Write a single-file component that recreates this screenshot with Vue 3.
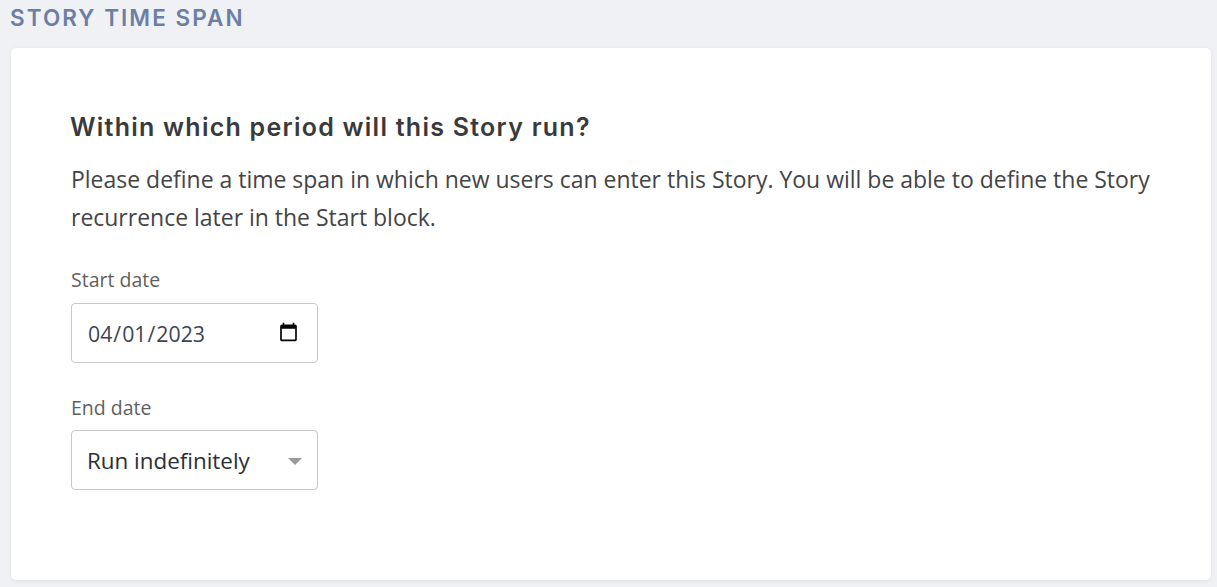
<script setup>
import { ref } from "vue";

const startDate = ref("2023-04-01");
const endDate = ref("indefinite");
</script>

<template>
  <div class="page">
    <h2 class="section-title">STORY TIME SPAN</h2>
    <div class="card">
      <h3 class="card-title">Within which period will this Story run?</h3>
      <p class="card-text">
        Please define a time span in which new users can enter this Story. You will be able to define the Story
        recurrence later in the Start block.
      </p>

      <div class="form-group">
        <label for="start" class="form-label">Start date</label>
        <input id="start" v-model="startDate" type="date" class="form-input form-date" />
      </div>

      <div class="form-group">
        <label for="end" class="form-label">End date</label>
        <div class="select-wrap">
          <select id="end" v-model="endDate" class="form-input form-select">
            <option value="indefinite">Run indefinitely</option>
            <option value="date">Pick a date</option>
          </select>
          <span class="select-arrow"></span>
        </div>
      </div>
    </div>
  </div>
</template>

<style scoped>
.page {
  box-sizing: border-box;
  height: 587px;
  padding: 0 6px 7px 11px;
  background: #f0f1f5;
  font-family: "Open Sans", sans-serif;
  overflow: hidden;
}

.section-title {
  margin: 0 0 0 -1px;
  height: 48px;
  padding-top: 6px;
  box-sizing: border-box;
  font-family: Inter, sans-serif;
  font-size: 22.5px;
  line-height: 24px;
  font-weight: 600;
  letter-spacing: 2.05px;
  color: #6c7fa3;
}

.card {
  box-sizing: border-box;
  height: 532px;
  padding: 64px 60px 0;
  background: #fff;
  border-radius: 5px;
  box-shadow: 0 1px 4px rgba(40, 50, 80, 0.08);
}

.card-title {
  margin: 0 0 0 -1px;
  font-family: Inter, sans-serif;
  font-size: 25px;
  line-height: 30px;
  font-weight: 600;
  letter-spacing: 1.25px;
  color: #3a3a3d;
}

.card-text {
  margin: 18px 0 0;
  font-size: 22.97px;
  line-height: 38px;
  color: #444446;
}

.form-group {
  margin-top: 31px;
  width: 247px;
}

.form-group + .form-group {
  margin-top: 32px;
}

.form-label {
  display: block;
  margin-bottom: 11px;
  font-size: 19.5px;
  line-height: 25px;
  color: #5f5f5f;
}

.form-group + .form-group .form-label {
  margin-bottom: 10px;
}

.form-input {
  display: block;
  box-sizing: border-box;
  width: 100%;
  height: 60px;
  padding: 0 16px;
  border: 1px solid #c9c9cb;
  border-radius: 4px;
  background: #fff;
  font-family: "Open Sans", sans-serif;
  font-size: 21.3px;
  color: #3f4652;
  outline: none;
}

.form-date {
  padding: 0 16px 0 15px;
}

.select-wrap {
  position: relative;
}

.form-select {
  appearance: none;
  color: #2b2f36;
  font-size: 22.4px;
  padding: 0 15px;
}

.select-arrow {
  position: absolute;
  top: 28px;
  right: 16px;
  border-left: 7.5px solid transparent;
  border-right: 7.5px solid transparent;
  border-top: 7px solid #9a9a9a;
}
</style>

<style>
html,
body {
  margin: 0;
  background: #f0f1f5;
}
</style>
